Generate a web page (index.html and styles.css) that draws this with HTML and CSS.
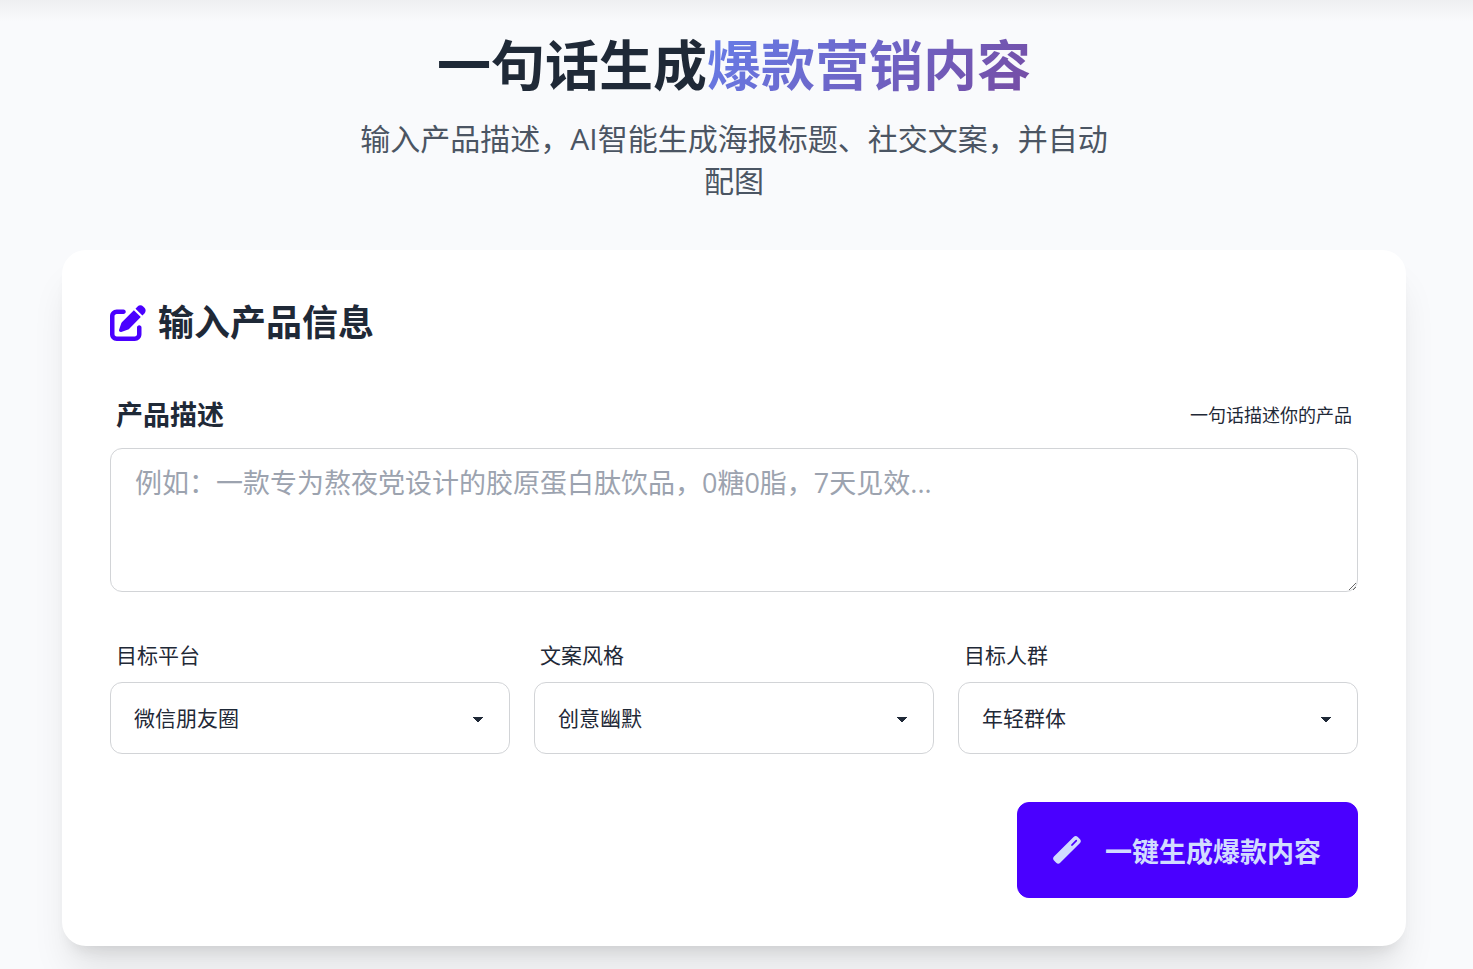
FILE: index.html
```
<!DOCTYPE html>
<html lang="zh-CN">
<head>
    <meta charset="UTF-8">
    <meta name="viewport" content="width=device-width, initial-scale=1.0">
    <title>一句话生成爆款营销内容</title>
    <link rel="stylesheet" href="styles.css">
</head>
<body>
    <main class="container">
        <div class="hero">
            <h1>一句话生成<span class="gradient-text">爆款营销内容</span></h1>
            <p>输入产品描述，AI智能生成海报标题、社交文案，并自动配图</p>
        </div>

        <form class="card">
            <h2 class="card-title">
                <svg class="icon-edit" viewBox="0 0 512 512" aria-hidden="true"><path fill="currentColor" d="M471.6 21.7c-21.9-21.9-57.3-21.9-79.2 0L362.3 51.7l97.9 97.9 30.1-30.1c21.9-21.9 21.9-57.3 0-79.2L471.6 21.7zm-299.2 220c-6.1 6.1-10.8 13.6-13.5 21.9l-29.6 88.8c-2.9 8.6-.6 18.1 5.8 24.6s15.9 8.7 24.6 5.8l88.8-29.6c8.2-2.7 15.7-7.4 21.9-13.5L437.7 172.3 339.7 74.3 172.4 241.7zM96 64C43 64 0 107 0 160V416c0 53 43 96 96 96H352c53 0 96-43 96-96V320c0-17.7-14.3-32-32-32s-32 14.3-32 32v96c0 17.7-14.3 32-32 32H96c-17.7 0-32-14.3-32-32V160c0-17.7 14.3-32 32-32h96c17.7 0 32-14.3 32-32s-14.3-32-32-32H96z"/></svg>
                输入产品信息
            </h2>

            <div class="label">
                <label class="label-main" for="product">产品描述</label>
                <span class="label-hint">一句话描述你的产品</span>
            </div>
            <textarea id="product" class="textarea" placeholder="例如：一款专为熬夜党设计的胶原蛋白肽饮品，0糖0脂，7天见效..."></textarea>

            <div class="options">
                <div class="field">
                    <label class="label" for="platform">目标平台</label>
                    <select id="platform" class="select">
                        <option>微信朋友圈</option>
                    </select>
                </div>
                <div class="field">
                    <label class="label" for="style">文案风格</label>
                    <select id="style" class="select">
                        <option>创意幽默</option>
                    </select>
                </div>
                <div class="field">
                    <label class="label" for="audience">目标人群</label>
                    <select id="audience" class="select">
                        <option>年轻群体</option>
                    </select>
                </div>
            </div>

            <div class="actions">
                <button type="button" class="btn">
                    <svg class="icon-wand" viewBox="0 0 28 28" aria-hidden="true">
                        <path fill="currentColor" fill-rule="evenodd" d="M1 20.4 20.6 1.1q2.1-2 4.2 0l2 2q2 2.1 0 4.2L7.2 26.8q-2 1.8-4 0L1 24.5q-1.8-2.1 0-4.1zM18.3 8.4q-.8 1.9 1.2 1.3l4.4-4.4q.7-2-1.2-1.3z"/>
                    </svg>
                    一键生成爆款内容
                </button>
            </div>
        </form>
    </main>
</body>
</html>
```

FILE: styles.css
```
* {
    box-sizing: border-box;
}

body {
    margin: 0;
    min-height: 100vh;
    color: #1f2937;
    background: linear-gradient(#eeeff1, #f9fafc 22px) no-repeat #f9fafc;
    font-family: "Open Sans", "Noto Sans CJK SC", sans-serif;
    font-size: 21px;
    line-height: 30px;
}

.container {
    padding: 38px 67px 23px 62px;
}

.hero {
    margin-bottom: 48px;
    text-align: center;
}

.hero h1 {
    margin: 0 0 26px;
    font-size: 54px;
    line-height: 54px;
    font-weight: 700;
}

.gradient-text {
    background: linear-gradient(135deg, #667eea 0%, #764ba2 100%);
    -webkit-background-clip: text;
    background-clip: text;
    color: transparent;
}

.hero p {
    max-width: 768px;
    margin: 0 auto;
    color: #4b5563;
    font-size: 30px;
    line-height: 42px;
}

.card {
    padding: 48px;
    border-radius: 24px;
    background: #fff;
    box-shadow: 0 30px 38px -8px rgba(0, 0, 0, 0.1), 0 12px 15px -9px rgba(0, 0, 0, 0.1);
}

.card-title {
    display: flex;
    align-items: center;
    gap: 12px;
    margin: 0 0 34px;
    font-size: 36px;
    line-height: 50px;
    font-weight: 700;
}

.icon-edit {
    width: 36px;
    height: 36px;
    color: #4a00ff;
}

.label {
    display: flex;
    align-items: center;
    justify-content: space-between;
    padding: 12px 6px;
}

.label-main {
    font-size: 27px;
    line-height: 42px;
    font-weight: 700;
}

.label-hint {
    font-size: 18px;
}

.textarea {
    display: block;
    width: 100%;
    height: 144px;
    padding: 12px 24px;
    border: 1px solid #d2d4d7;
    border-radius: 12px;
    background: #fff;
    color: inherit;
    font-family: inherit;
    font-size: 27px;
    line-height: 44px;
    resize: vertical;
}

.textarea::placeholder {
    color: #9ca3af;
}

.options {
    display: grid;
    grid-template-columns: repeat(3, 1fr);
    gap: 24px;
    margin-top: 36px;
}

/* the arrow is made of two small diagonal gradients */
.select {
    appearance: none;
    display: block;
    width: 100%;
    height: 72px;
    padding: 0 60px 0 23px;
    border: 1px solid #d2d4d7;
    border-radius: 12px;
    color: inherit;
    font-family: inherit;
    font-size: 21px;
    line-height: 30px;
    background-color: #fff;
    background-image: linear-gradient(45deg, transparent 50%, currentColor 50%), linear-gradient(135deg, currentColor 50%, transparent 50%);
    background-position: calc(100% - 31px) 53%, calc(100% - 26px) 53%;
    background-size: 5px 6px;
    background-repeat: no-repeat;
}

.actions {
    display: flex;
    justify-content: flex-end;
    margin-top: 48px;
}

.btn {
    display: flex;
    align-items: center;
    gap: 24px;
    height: 96px;
    padding: 0 36px 0 35px;
    border: 1px solid #4a00ff;
    border-radius: 12px;
    background: #4a00ff;
    color: #d1dbff;
    font-family: inherit;
    font-size: 27px;
    font-weight: 700;
    cursor: pointer;
}

.icon-wand {
    width: 28px;
    height: 28px;
}
```
